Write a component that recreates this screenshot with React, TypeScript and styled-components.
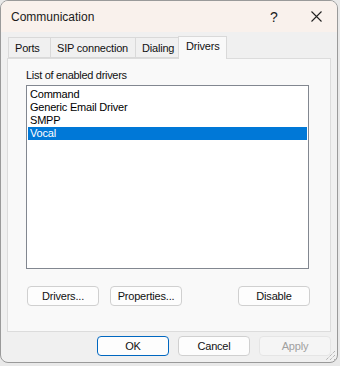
import React from "react";
import styled, { createGlobalStyle } from "styled-components";

const Global = createGlobalStyle`
  html, body {
    margin: 0;
    padding: 0;
    background: #e9e9e9;
    font-family: "Liberation Sans", Arial, sans-serif;
  }
`;

const tabs = ["Ports", "SIP connection", "Dialing", "Drivers"];
const tabWidths = [43, 86, 44, 49];
const drivers = ["Command", "Generic Email Driver", "SMPP", "Vocal"];

const Window = styled.div`
  position: relative;
  width: 336px;
  height: 361px;
  border: 1px solid #9a9a9a;
  border-radius: 8px;
  overflow: hidden;
  background: #f0f0f0;
  display: flex;
  flex-direction: column;
`;

const TitleBar = styled.div`
  height: 31px;
  background: #f9f1ec;
  display: flex;
  align-items: center;
  padding-left: 10px;
  font-size: 12px;
  color: #1a1a1a;
`;

const Title = styled.span`
  flex: 1;
  padding-top: 1px;
`;

const Help = styled.span`
  width: 46px;
  text-align: center;
  font-size: 14px;
  margin-right: -4px;
`;

const CloseBtn = styled.span`
  width: 46px;
  height: 31px;
  display: flex;
  align-items: center;
  justify-content: center;
  margin-right: -2px;
`;

const Body = styled.div`
  flex: 1;
  padding: 5px 5px 0 6px;
  display: flex;
  flex-direction: column;
`;

const TabStrip = styled.div`
  display: flex;
  height: 21px;
  align-items: flex-end;
  padding-left: 2px;
  position: relative;
  z-index: 1;
`;

const Tab = styled.div<{ $active?: boolean; $w: number }>`
  box-sizing: border-box;
  width: ${(p) => p.$w}px;
  height: ${(p) => (p.$active ? 23 : 21)}px;
  margin-bottom: ${(p) => (p.$active ? -1 : 0)}px;
  border: 1px solid #d9d9d9;
  border-bottom: ${(p) => (p.$active ? "none" : "1px solid #d9d9d9")};
  margin-left: -1px;
  background: ${(p) => (p.$active ? "#f9f9f9" : "#f0f0f0")};
  font-size: 11px;
  letter-spacing: -0.2px;
  color: #111;
  padding: ${(p) => (p.$active ? "3px 0 0 7px" : "4px 0 0 6px")};
  white-space: nowrap;
`;

const Panel = styled.div`
  box-sizing: border-box;
  width: 324px;
  height: 274px;
  border: 1px solid #dcdcdc;
  background: #f9f9f9;
  padding: 10px 20px 0 18px;
  display: flex;
  flex-direction: column;
`;

const Label = styled.div`
  font-size: 11px;
  letter-spacing: -0.3px;
  line-height: 13px;
  color: #111;
  height: 16px;
`;

const ListBox = styled.div`
  box-sizing: border-box;
  width: 283px;
  height: 184px;
  border: 1px solid #828790;
  background: #fff;
  padding: 2px 1px;
`;

const Item = styled.div<{ $selected?: boolean }>`
  height: 13px;
  line-height: 13px;
  font-size: 11px;
  letter-spacing: -0.2px;
  padding-left: 2px;
  color: ${(p) => (p.$selected ? "#fff" : "#000")};
  background: ${(p) => (p.$selected ? "#0078d7" : "transparent")};
`;

const ButtonRow = styled.div`
  display: flex;
  gap: 11px;
  margin-top: 17px;
  padding-left: 1px;
`;

const Spacer = styled.div`
  flex: 1;
`;

const Button = styled.button<{ $primary?: boolean }>`
  box-sizing: border-box;
  width: 72px;
  height: 20px;
  padding: 0;
  border-radius: 4px;
  border: 1px solid ${(p) => (p.$primary ? "#0067c0" : "#d0d0d0")};
  background: #fdfdfd;
  font-family: "Liberation Sans", Arial, sans-serif;
  font-size: 11px;
  letter-spacing: -0.2px;
  color: #111;
  &:disabled {
    background: #f5f5f5;
    border-color: #e5e5e5;
    color: #a0a0a0;
  }
`;

const Footer = styled.div`
  display: flex;
  justify-content: flex-end;
  gap: 9px;
  padding: 4px 1px 0 0;
`;

const Grip = styled.svg`
  position: absolute;
  right: 1px;
  bottom: 1px;
`;

export default function App() {
  return (
    <>
      <Global />
      <Window>
        <TitleBar>
          <Title>Communication</Title>
          <Help>?</Help>
          <CloseBtn>
            <svg width="11" height="11" viewBox="0 0 11 11">
              <path d="M0.5 0.5 L10.5 10.5 M10.5 0.5 L0.5 10.5" stroke="#222" strokeWidth="1.1" />
            </svg>
          </CloseBtn>
        </TitleBar>
        <Body>
          <TabStrip>
            {tabs.map((t, i) => (
              <Tab key={t} $w={tabWidths[i]} $active={t === "Drivers"}>
                {t}
              </Tab>
            ))}
          </TabStrip>
          <Panel>
            <Label>List of enabled drivers</Label>
            <ListBox>
              {drivers.map((d) => (
                <Item key={d} $selected={d === "Vocal"}>
                  {d}
                </Item>
              ))}
            </ListBox>
            <ButtonRow>
              <Button>Drivers...</Button>
              <Button>Properties...</Button>
              <Spacer />
              <Button>Disable</Button>
            </ButtonRow>
          </Panel>
          <Footer>
            <Button $primary>OK</Button>
            <Button>Cancel</Button>
            <Button disabled>Apply</Button>
          </Footer>
        </Body>
        <Grip width="12" height="12" viewBox="0 0 12 12">
          <path d="M11 2 L2 11 M11 6 L6 11 M11 10 L10 11" stroke="#9a9a9a" strokeWidth="1" strokeDasharray="1 1" />
        </Grip>
      </Window>
    </>
  );
}
